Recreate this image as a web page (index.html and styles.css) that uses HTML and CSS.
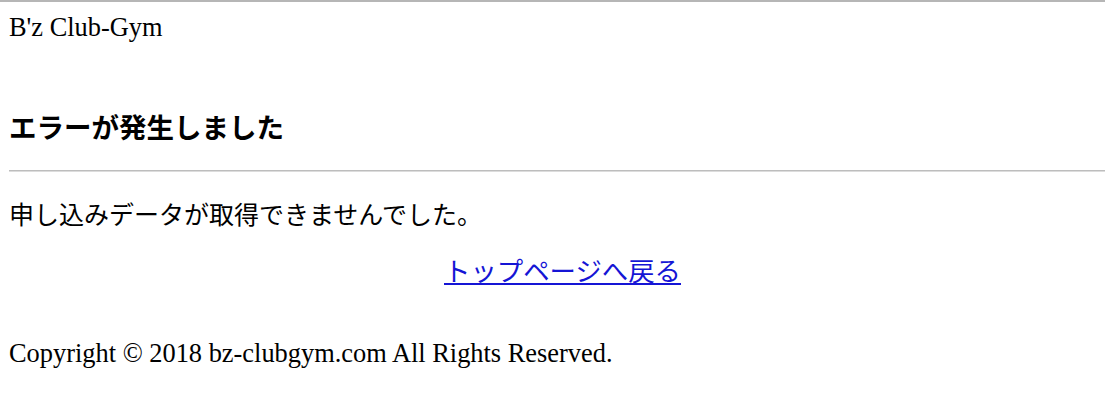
FILE: index.html
```html
<!DOCTYPE html>
<html lang="ja">
<head>
<meta charset="utf-8">
<title>エラーが発生しました | B'z Club-Gym</title>
<link rel="stylesheet" href="styles.css">
</head>
<body>
<div class="page">
  <header class="site-header">
    <p class="site-name">B'z Club-Gym</p>
  </header>
  <main class="content">
    <h1 class="error-title">エラーが発生しました</h1>
    <hr class="rule">
    <p class="message">申し込みデータが取得できませんでした。</p>
    <p class="back"><a class="back-link" href="#">トップページへ戻る</a></p>
  </main>
  <footer class="site-footer">
    <p class="copyright">Copyright © 2018 bz-clubgym.com All Rights Reserved.</p>
  </footer>
</div>
</body>
</html>
```

FILE: styles.css
```css
html {
  overflow: hidden;
  background: #fff;
}

body {
  margin: 0;
  border-top: 2px solid #b6b6b6;
  color: #000;
  font-family: "Liberation Serif", "Noto Sans CJK JP", serif;
  font-size: 26.4px;
  line-height: 32px;
}

.page {
  margin-left: 9px;
  margin-right: -11px;
}

.site-name {
  margin: 9px 0 0;
}

.error-title {
  margin: 69px 0 0;
  font-size: 27.5px;
  line-height: 34px;
  font-weight: bold;
}

.rule {
  margin: 24px 0 0;
  height: 0;
  border: 0;
  border-top: 1px solid #bdbdbd;
  border-bottom: 1px solid #dcdcdc;
}

.message {
  margin: 28px 0 0;
  font-size: 25px;
}

.back {
  margin: 24px 0 0;
  text-align: center;
}

.back-link {
  color: #1515d5;
  text-decoration: underline;
}

.copyright {
  margin: 49px 0 0;
}
```
